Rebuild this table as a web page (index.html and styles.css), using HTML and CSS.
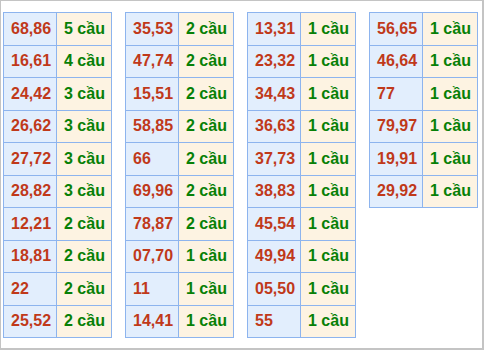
FILE: index.html
```html
<!DOCTYPE html>
<html>
<head>
<meta charset="utf-8">
<link rel="stylesheet" href="styles.css">
</head>
<body>
<div class="box">
  <table class="t">
    <tr><td class="n">68,86</td><td class="c">5 cầu</td></tr>
    <tr><td class="n">16,61</td><td class="c">4 cầu</td></tr>
    <tr><td class="n">24,42</td><td class="c">3 cầu</td></tr>
    <tr><td class="n">26,62</td><td class="c">3 cầu</td></tr>
    <tr><td class="n">27,72</td><td class="c">3 cầu</td></tr>
    <tr><td class="n">28,82</td><td class="c">3 cầu</td></tr>
    <tr><td class="n">12,21</td><td class="c">2 cầu</td></tr>
    <tr><td class="n">18,81</td><td class="c">2 cầu</td></tr>
    <tr><td class="n">22</td><td class="c">2 cầu</td></tr>
    <tr><td class="n">25,52</td><td class="c">2 cầu</td></tr>
  </table>
  <table class="t">
    <tr><td class="n">35,53</td><td class="c">2 cầu</td></tr>
    <tr><td class="n">47,74</td><td class="c">2 cầu</td></tr>
    <tr><td class="n">15,51</td><td class="c">2 cầu</td></tr>
    <tr><td class="n">58,85</td><td class="c">2 cầu</td></tr>
    <tr><td class="n">66</td><td class="c">2 cầu</td></tr>
    <tr><td class="n">69,96</td><td class="c">2 cầu</td></tr>
    <tr><td class="n">78,87</td><td class="c">2 cầu</td></tr>
    <tr><td class="n">07,70</td><td class="c">1 cầu</td></tr>
    <tr><td class="n">11</td><td class="c">1 cầu</td></tr>
    <tr><td class="n">14,41</td><td class="c">1 cầu</td></tr>
  </table>
  <table class="t">
    <tr><td class="n">13,31</td><td class="c">1 cầu</td></tr>
    <tr><td class="n">23,32</td><td class="c">1 cầu</td></tr>
    <tr><td class="n">34,43</td><td class="c">1 cầu</td></tr>
    <tr><td class="n">36,63</td><td class="c">1 cầu</td></tr>
    <tr><td class="n">37,73</td><td class="c">1 cầu</td></tr>
    <tr><td class="n">38,83</td><td class="c">1 cầu</td></tr>
    <tr><td class="n">45,54</td><td class="c">1 cầu</td></tr>
    <tr><td class="n">49,94</td><td class="c">1 cầu</td></tr>
    <tr><td class="n">05,50</td><td class="c">1 cầu</td></tr>
    <tr><td class="n">55</td><td class="c">1 cầu</td></tr>
  </table>
  <table class="t">
    <tr><td class="n">56,65</td><td class="c">1 cầu</td></tr>
    <tr><td class="n">46,64</td><td class="c">1 cầu</td></tr>
    <tr><td class="n">77</td><td class="c">1 cầu</td></tr>
    <tr><td class="n">79,97</td><td class="c">1 cầu</td></tr>
    <tr><td class="n">19,91</td><td class="c">1 cầu</td></tr>
    <tr><td class="n">29,92</td><td class="c">1 cầu</td></tr>
  </table>
</div>
</body>
</html>
```
FILE: styles.css
```css
html, body {
  margin: 0;
  padding: 0;
  background: #ffffff;
}
.box {
  box-sizing: border-box;
  width: 484px;
  height: 350px;
  border: 1px solid #c4c4c4;
  border-right-width: 2px;
  border-bottom-width: 2px;
  padding: 11px 0 0 2px;
  display: flex;
  align-items: flex-start;
  gap: 13px;
}
.t {
  border-collapse: collapse;
  width: 109px;
  table-layout: fixed;
  font-family: "Liberation Sans", Arial, sans-serif;
  font-weight: bold;
  font-size: 16px;
}
.t td {
  border: 1px solid #8db4ee;
  height: 32.5px;
  padding: 0 0 0 7px;
  box-sizing: border-box;
  line-height: 18px;
  white-space: nowrap;
}
.n {
  width: 53px;
  background: #e2eefd;
  color: #c0391a;
}
.c {
  background: #fdf3e2;
  color: #078007;
}
```
